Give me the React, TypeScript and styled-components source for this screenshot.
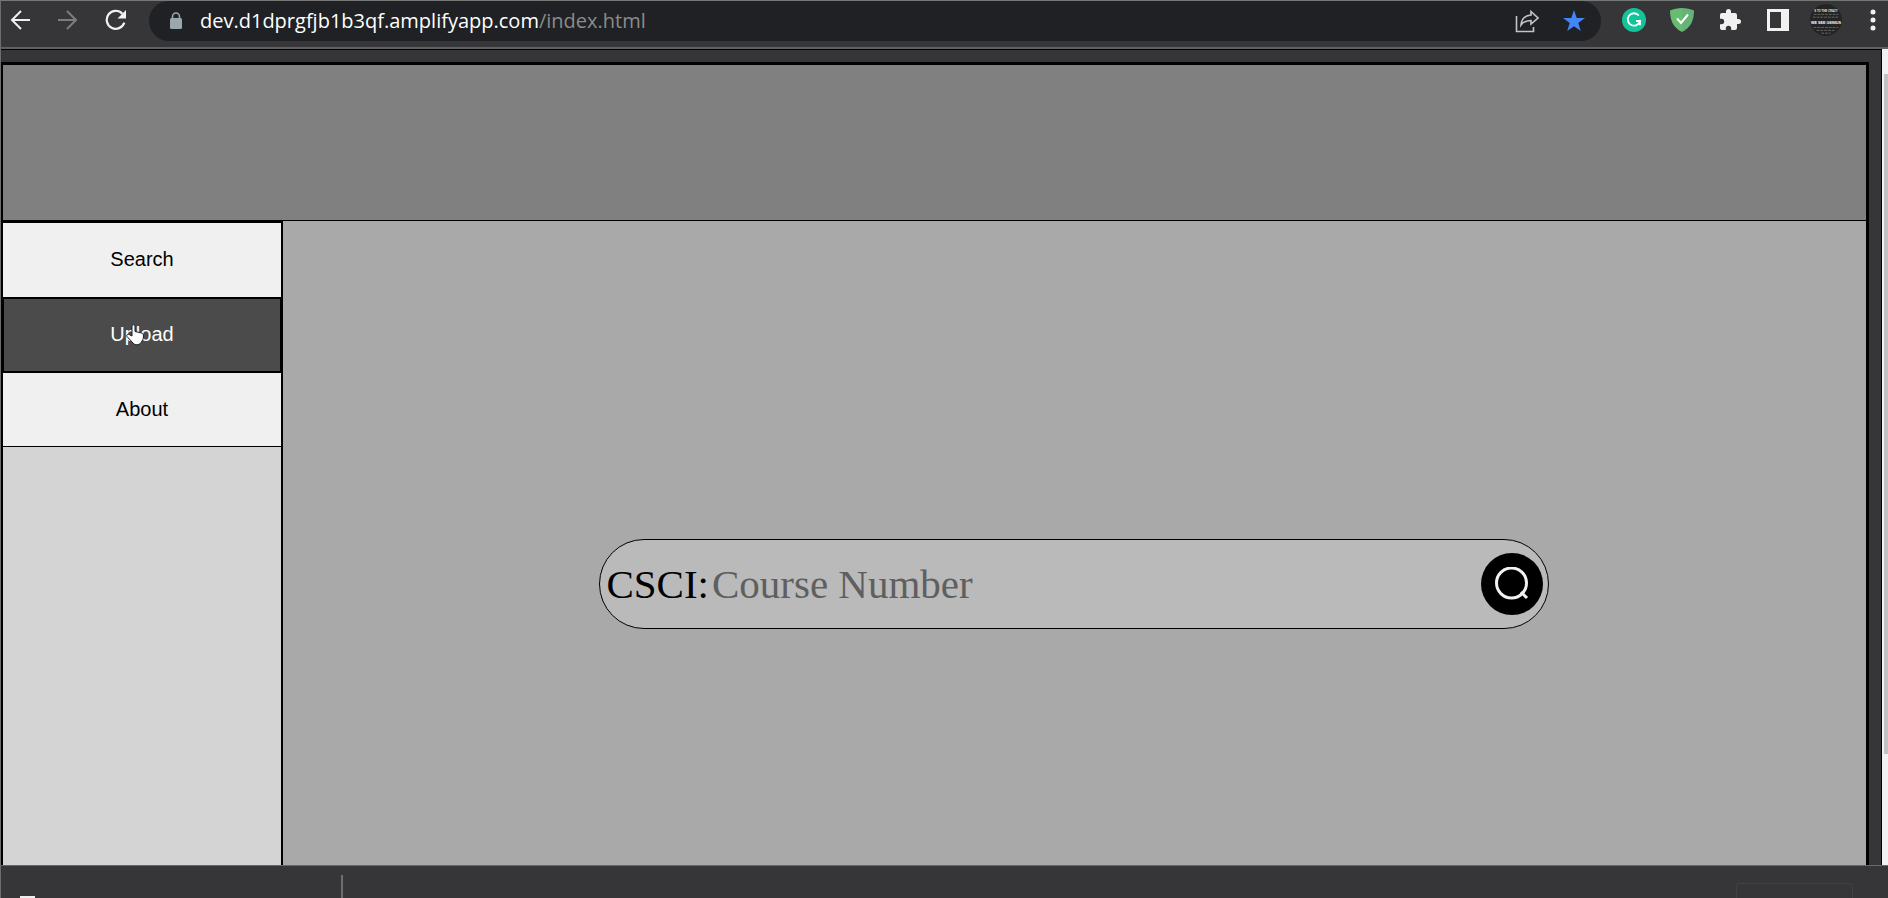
import React from "react";
import styled, { createGlobalStyle } from "styled-components";

const GlobalStyle = createGlobalStyle`
  *, *::before, *::after { box-sizing: border-box; }
  html, body, #root { height: 100%; }
  body { margin: 0; overflow: hidden; background: #363638; }
  button, input { font: inherit; color: inherit; margin: 0; padding: 0; border: 0; background: none; }
  button { cursor: pointer; }
  svg { display: block; }
`;

const Window = styled.div`
  display: flex;
  flex-direction: column;
  height: 100vh;
  border-top: 1px solid #767878;
  border-left: 1px solid #6b6d6d;
  background: #363638;
  overflow: hidden;
`;

const Toolbar = styled.header`
  flex: none;
  display: flex;
  align-items: flex-start;
  height: 48px;
  border-bottom: 2px solid #606063;
`;

const NavGroup = styled.div`
  flex: none;
  display: flex;
  gap: 16px;
  width: 148px;
  padding-left: 3px;
`;

const IconButton = styled.button<{ $width?: number }>`
  flex: none;
  display: flex;
  align-items: center;
  justify-content: center;
  width: ${({ $width = 32 }) => $width}px;
  height: 38px;
`;

const AddressBar = styled.div`
  flex: 1;
  min-width: 0;
  display: flex;
  align-items: center;
  height: 40px;
  padding: 0 10px 0 16px;
  border-radius: 20px;
  background: #202124;
`;

const Url = styled.a`
  flex: 1;
  min-width: 0;
  margin-left: 13px;
  font: 20px/38px "Open Sans", "Noto Sans", sans-serif;
  color: #fff;
  text-decoration: none;
  white-space: nowrap;
`;

const UrlPath = styled.span`
  color: #8a8b8d;
`;

const Extensions = styled.div`
  flex: none;
  display: flex;
  gap: 16px;
  padding-left: 17px;
`;

const Viewport = styled.div`
  flex: 1;
  min-height: 0;
  display: flex;
`;

const PageArea = styled.div`
  flex: 1;
  min-width: 0;
  display: flex;
  padding: 12px 12px 0 0;
  border-top: 1px solid #000;
  border-right: 1px solid #000;
`;

const Page = styled.div`
  flex: 1;
  min-width: 0;
  display: flex;
  flex-direction: column;
  border: solid #000;
  border-width: 3px 3px 0 2px;
  background: #a9a9a9;
`;

const Banner = styled.div`
  flex: none;
  height: 156px;
  border-bottom: 1px solid #000;
  background: #808080;
`;

const Body = styled.div`
  flex: 1;
  min-height: 0;
  display: flex;
`;

const Sidebar = styled.nav`
  flex: none;
  display: flex;
  flex-direction: column;
  width: 280px;
  border: solid #000;
  border-width: 2px 2px 0 0;
  background: #d4d4d4;
`;

const NavItem = styled.button<{ $active?: boolean }>`
  position: relative;
  flex: none;
  height: ${({ $active }) => ($active ? 76 : 74)}px;
  padding-bottom: 2px;
  border: solid #000;
  border-width: ${({ $active }) => ($active ? "2px 1px" : "0")};
  background: ${({ $active }) => ($active ? "#4b4b4b" : "#f0f0f0")};
  color: ${({ $active }) => ($active ? "#fff" : "#000")};
  font: 20px/24px "Liberation Sans", Arial, sans-serif;

  &:last-child { border-bottom-width: 1px; }
`;

const Pointer = styled.svg`
  position: absolute;
  top: 25px;
  left: 122px;
`;

const Main = styled.main`
  flex: 1;
  min-width: 0;
  display: flex;
  justify-content: center;
  align-items: flex-start;
  padding: 318px 1px 0 0;
`;

const SearchForm = styled.form`
  display: flex;
  align-items: center;
  width: 60%;
  height: 90px;
  padding: 0 5px 0 6px;
  border: 1px solid #000;
  border-radius: 45px;
  background: #bababa;
  font: 41px/46px "Liberation Serif", "Times New Roman", serif;
  color: #000;
`;

const CourseInput = styled.input`
  flex: 1;
  min-width: 0;
  margin-left: 3px;
  height: 46px;
  outline: 0;

  &::placeholder { color: #5f5f5f; opacity: 1; }
`;

const SearchButton = styled.button`
  flex: none;
  display: flex;
  align-items: center;
  justify-content: center;
  width: 62px;
  height: 62px;
  border-radius: 50%;
  background: #000;
`;

const ScrollTrack = styled.div`
  flex: none;
  width: 6px;
  padding: 25px 0 0 2px;
  background: #f1f1f1;
`;

const ScrollThumb = styled.div`
  height: 86%;
  background: #c1c1c1;
`;

const Shelf = styled.footer`
  flex: none;
  display: flex;
  align-items: flex-end;
  justify-content: space-between;
  height: 33px;
  border-top: 1px solid #666869;
  overflow: hidden;
`;

const Download = styled.div`
  display: flex;
  align-items: flex-end;
  width: 342px;
  height: 23px;
  padding-left: 19px;
  border-right: 2px solid #6b6e6f;
`;

const FileCorner = styled.span`
  width: 15px;
  height: 2px;
  background: #ededed;
`;

const ShowAll = styled.div`
  width: 117px;
  height: 15px;
  margin-right: 35px;
  border: 1px solid #414145;
  border-bottom: 0;
  border-radius: 4px 4px 0 0;
`;

export default function App() {
  return (
    <>
      <GlobalStyle />
      <Window>
        <Toolbar>
          <NavGroup>
            <IconButton aria-label="Back">
              <svg width="20" height="20" viewBox="0 0 20 20" fill="none" stroke="#f1f1f1" strokeWidth="2">
                <path d="M20 10H2M11 1L2 10l9 9" />
              </svg>
            </IconButton>
            <IconButton aria-label="Forward">
              <svg width="20" height="20" viewBox="0 0 20 20" fill="none" stroke="#7d7c80" strokeWidth="2">
                <path d="M0 10h18M9 1l9 9-9 9" />
              </svg>
            </IconButton>
            <IconButton aria-label="Reload">
              <svg width="22" height="22" viewBox="0 0 22 22">
                <path d="M19.3 13.6A9 9 0 1 1 17.4 4.7" fill="none" stroke="#f1f1f1" strokeWidth="2.2" />
                <path d="M21 1v8.5h-8.5z" fill="#f1f1f1" />
              </svg>
            </IconButton>
          </NavGroup>
          <AddressBar>
            <IconButton aria-label="Site information" $width={22}>
              <svg width="14" height="18" viewBox="0 0 14 18">
                <path d="M3.5 8V4.5a3.5 3.5 0 0 1 7 0V8" fill="none" stroke="#9aa7b0" strokeWidth="1.6" />
                <rect x="1" y="6" width="12" height="11" rx="1.5" fill="#9aa7b0" />
              </svg>
            </IconButton>
            <Url href="#">
              dev.d1dprgfjb1b3qf.amplifyapp.com<UrlPath>/index.html</UrlPath>
            </Url>
            <IconButton aria-label="Share" $width={60}>
              <svg width="24" height="24" viewBox="0 0 24 24" fill="none" stroke="#c4c4c8" strokeWidth="1.6">
                <path d="M1.5 7v15.500h17V18" />
                <path d="M16 2.500l7 6.500-7 6v-3.500c-4 0-7.500 1-10 4.500.5-6 4.500-9.500 10-10z" />
              </svg>
            </IconButton>
            <IconButton aria-label="Bookmark" $width={34}>
              <svg width="24" height="24" viewBox="0 0 24 24" fill="#4285f4">
                <path d="M12 1l2.700 8H23l-6.700 4.900L18.800 22 12 17.200 5.200 22l2.500-8.100L1 9h8.300z" />
              </svg>
            </IconButton>
          </AddressBar>
          <Extensions>
            <IconButton aria-label="Grammar checker">
              <svg width="24" height="24" viewBox="0 0 24 24">
                <circle cx="12" cy="12" r="12" fill="#15c39a" />
                <path d="M16.800 7.500A6.200 6.200 0 1 0 18 13h-4M18 12.200v5" fill="none" stroke="#fff" strokeWidth="1.800" />
              </svg>
            </IconButton>
            <IconButton aria-label="Ad blocker">
              <svg width="24" height="24" viewBox="0 0 24 24">
                <path d="M12 0C8 0 3.500 1 0 2.500 0 12 3 19.500 12 24z" fill="#68bc71" />
                <path d="M12 0c4 0 8.500 1 12 2.500C24 12 21 19.500 12 24z" fill="#67b279" />
                <path d="M7 10.500l4 4.500 7-8.500" fill="none" stroke="#fff" strokeWidth="2" />
              </svg>
            </IconButton>
            <IconButton aria-label="Extensions">
              <svg width="24" height="24" viewBox="0 0 24 24" fill="#f1f1f1">
                <path d="M20.500 11H19V7a2 2 0 0 0-2-2h-4V3.500a2.500 2.500 0 0 0-5 0V5H4a2 2 0 0 0-2 2v3.800h1.500a2.700 2.700 0 0 1 0 5.400H2V20a2 2 0 0 0 2 2h3.800v-1.500a2.700 2.700 0 0 1 5.400 0V22H17a2 2 0 0 0 2-2v-4h1.500a2.500 2.500 0 0 0 0-5z" />
              </svg>
            </IconButton>
            <IconButton aria-label="Side panel">
              <svg width="22" height="22" viewBox="0 0 22 22">
                <path fillRule="evenodd" d="M0 0h22v22H0zM3 3v16h11V3z" fill="#f1f1f1" />
              </svg>
            </IconButton>
            <IconButton aria-label="Profile">
              <svg width="34" height="34" viewBox="0 0 34 34" fontFamily="Liberation Sans, sans-serif" fontWeight="700" textAnchor="middle">
                <circle cx="17" cy="17" r="17" fill="#242425" />
                <text x="17" y="8" fontSize="3" fill="#e4e4e4">S TO THE CRAZY</text>
                <path d="M4 11h26M3 14h28" stroke="#68686a" strokeDasharray="3 1" />
                <text x="17" y="21" fontSize="4" fill="#fff">WE SEE GENIUS</text>
                <path d="M4 25h26M7 28h20M12 31h10" stroke="#68686a" strokeDasharray="3 1" />
              </svg>
            </IconButton>
            <IconButton aria-label="Menu" $width={30}>
              <svg width="6" height="22" viewBox="0 0 6 22" fill="#f1f1f1">
                <circle cx="3" cy="3" r="2.500" />
                <circle cx="3" cy="11" r="2.500" />
                <circle cx="3" cy="19" r="2.500" />
              </svg>
            </IconButton>
          </Extensions>
        </Toolbar>
        <Viewport>
          <PageArea>
            <Page>
              <Banner />
              <Body>
                <Sidebar>
                  <NavItem>Search</NavItem>
                  <NavItem $active>
                    Upload
                    <Pointer width="18" height="22" viewBox="0 0 18 22">
                      <path
                        d="M6 12V2.500c0-2.300 3-2.300 3 0V7.500l6.500 1.500c1.500.5 2 1.500 2 3 0 3-1 4.500-2.500 6.500-2 3-6 3-8 .500L1 12.500c-1-2 1.500-3 3-1.500z"
                        fill="#fff"
                        stroke="#1b1b2b"
                      />
                    </Pointer>
                  </NavItem>
                  <NavItem>About</NavItem>
                </Sidebar>
                <Main>
                  <SearchForm onSubmit={(e) => e.preventDefault()}>
                    <label htmlFor="course">CSCI:</label>
                    <CourseInput id="course" type="text" placeholder="Course Number" />
                    <SearchButton type="submit" aria-label="Search courses">
                      <svg width="34" height="34" viewBox="0 0 34 34" fill="none" stroke="#f1f1f1" strokeWidth="3">
                        <circle cx="16.500" cy="16" r="15" />
                        <path d="M26 25l6 6" />
                      </svg>
                    </SearchButton>
                  </SearchForm>
                </Main>
              </Body>
            </Page>
          </PageArea>
          <ScrollTrack>
            <ScrollThumb />
          </ScrollTrack>
        </Viewport>
        <Shelf>
          <Download>
            <FileCorner />
          </Download>
          <ShowAll />
        </Shelf>
      </Window>
    </>
  );
}
